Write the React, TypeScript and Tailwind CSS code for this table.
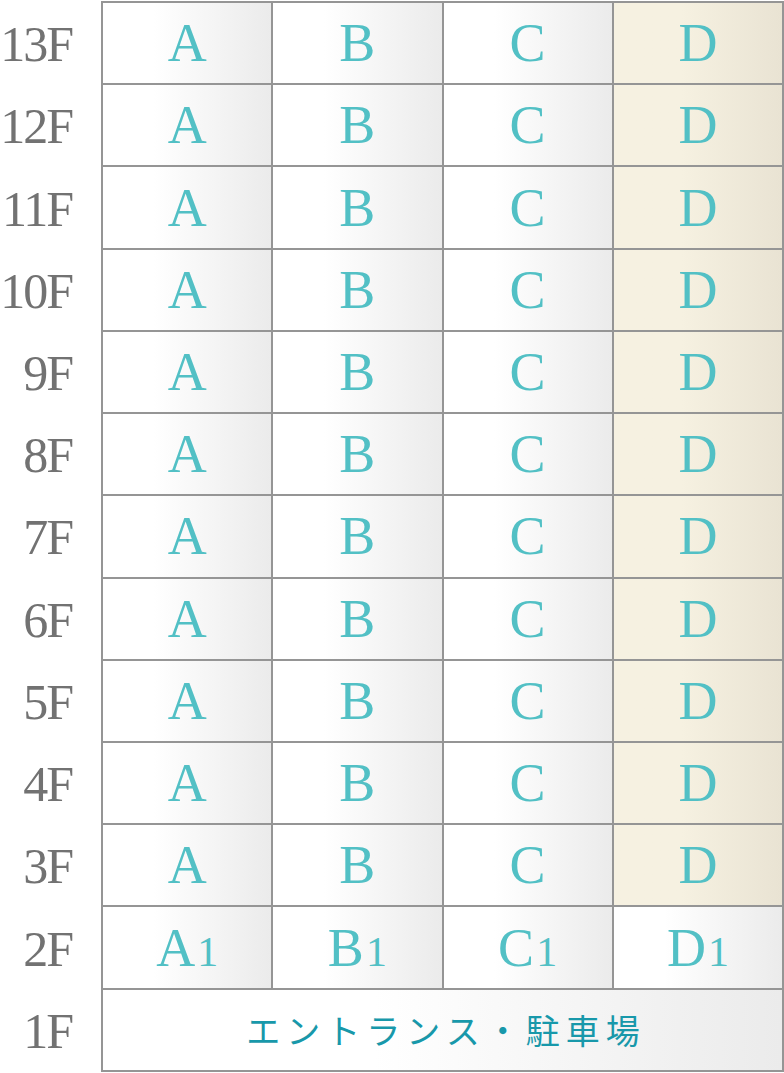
const floors = ['13F', '12F', '11F', '10F', '9F', '8F', '7F', '6F', '5F', '4F', '3F'];
const units = ['A', 'B', 'C', 'D'];

const serif = "font-['Liberation_Serif',_'Times_New_Roman',_serif]";

function Label({ text }: { text: string }) {
  return (
    <div
      className={`w-[101px] shrink-0 flex items-center justify-end pr-[29px] text-[50px] leading-none tracking-[-2px] text-[#727272] ${serif}`}
    >
      {text}
    </div>
  );
}

function Cell({ unit, sub, cream }: { unit: string; sub?: boolean; cream?: boolean }) {
  return (
    <div
      className={`flex items-center justify-center border-r-2 border-[#959595] ${
        cream
          ? 'bg-linear-to-r from-[#f6f1e1] from-40% to-[#e9e3d3]'
          : 'bg-linear-to-r from-white from-30% to-[#ebebeb]'
      }`}
    >
      <span className={`text-[54px] leading-none text-[#52c0c5] ${serif}`}>
        {unit}
        {sub && <span className="text-[42px] ml-[2px]">1</span>}
      </span>
    </div>
  );
}

export default function App() {
  return (
    <div className="w-[784px] h-[1073px] bg-white pt-[1px]">
      <div className="ml-[101px] h-[2px] bg-[#959595]" />

      {floors.map((f) => (
        <div key={f} className="flex h-[82.23px]">
          <Label text={f} />
          <div className="flex-1 grid grid-cols-4 border-l-2 border-b-2 border-[#959595]">
            {units.map((u) => (
              <Cell key={u} unit={u} cream={u === 'D'} />
            ))}
          </div>
        </div>
      ))}

      {/* 2F */}
      <div className="flex h-[82.23px]">
        <Label text="2F" />
        <div className="flex-1 grid grid-cols-4 border-l-2 border-b-2 border-[#959595]">
          {units.map((u) => (
            <Cell key={u} unit={u} sub />
          ))}
        </div>
      </div>

      {/* 1F */}
      <div className="flex h-[82.23px]">
        <Label text="1F" />
        <div className="flex-1 flex items-center justify-center border-l-2 border-r-2 border-b-2 border-[#959595] bg-linear-to-r from-white from-40% to-[#ebebeb]">
          <span className="pl-[7px] text-[34px] leading-none tracking-[6px] text-[#1898aa] font-['Noto_Sans_CJK_JP',_sans-serif]">
            エントランス・駐車場
          </span>
        </div>
      </div>
    </div>
  );
}
